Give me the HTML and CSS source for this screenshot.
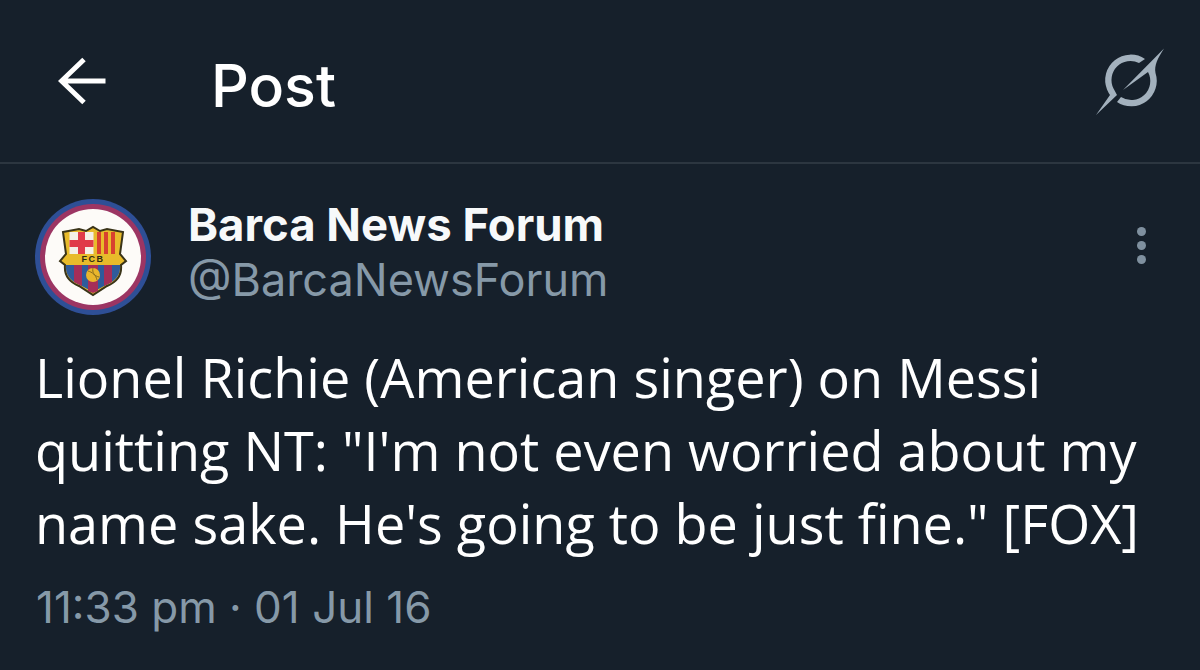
FILE: index.html
```html
<!DOCTYPE html>
<html lang="en">
<head>
<meta charset="utf-8">
<title>Post</title>
<link rel="stylesheet" href="styles.css">
</head>
<body>
<main class="screen">
  <header class="topbar">
    <svg class="back" viewBox="0 0 50 50" width="50" height="50" aria-hidden="true">
      <path d="M47.500 25H4M26 3.500L3.500 25L26 46.500" fill="none" stroke="#fff" stroke-width="5"/>
    </svg>
    <h1 class="title">Post</h1>
    <svg class="grok" viewBox="10 13 80 76" width="80" height="76" aria-hidden="true">
      <path d="M65 29A25.500 25.500 0 0 0 27 59.500Q28.500 63 30 65L16 85L37 65L33.500 58.500A19 19 0 0 1 59 33Z" fill="#a3b1bd"/>
      <path d="M84 18.500C78 28 74 35 75.500 43A25.500 25.500 0 0 1 37 72L41 67A19 19 0 0 0 68 42L43 60Z" fill="#a3b1bd"/>
    </svg>
  </header>
  <section class="post">
    <div class="author">
      <svg class="avatar" viewBox="0 0 116 116" width="116" height="116" aria-hidden="true">
        <circle cx="58" cy="58" r="58" fill="#2e4f96"/>
        <circle cx="58" cy="58" r="53" fill="#9c3563"/>
        <circle cx="58" cy="58" r="48" fill="#fdfbf8"/>
        <path d="M28 33L44 30L51 32L58 28L65 32L72 30L88 33L85 55L91 62L86 66C87 76 82 83 72 87L58 96L44 87C34 83 29 76 30 66L25 62L31 55Z" fill="#e8bb2b" stroke="#3a3418" stroke-width="2"/>
        <rect x="34.500" y="33" width="24" height="22" fill="#f4f0e6"/>
        <path d="M43 33h7v8h8.500v7h-8.500v7h-7v-7h-8.500v-7h8.500z" fill="#e03b48"/>
        <path d="M62 33h4v22h-4zM69 33h4v22h-4zM76 33h4v22h-4z" fill="#d8412f"/>
        <text class="fcb" x="58" y="63" text-anchor="middle">FCB</text>
        <path d="M31 66H85C86 75 81 82 71 86L58 93L45 86C35 82 30 75 31 66Z" fill="#2f5b9b"/>
        <path d="M39 66h8v21l-8-4zM53 66h10v26l-5 2-5-2zM69 66h8v17l-8 4z" fill="#a52e58"/>
        <circle cx="58" cy="76" r="7" fill="#e9b62c"/>
        <path d="M53 72c4 1 8 4 9 9M58 69c-1 4 1 8 6 9" fill="none" stroke="#8b6d1c" stroke-width="1"/>
      </svg>
      <div class="names">
        <div class="name">Barca News Forum</div>
        <div class="handle">@BarcaNewsForum</div>
      </div>
      <div class="more" aria-hidden="true"><i></i><i></i><i></i></div>
    </div>
    <p class="text">Lionel Richie (American singer) on Messi<br>quitting NT: "I'm not even worried about my<br>name sake. He's going to be just fine." [FOX]</p>
    <div class="time">11:33 pm · 01 Jul 16</div>
  </section>
</main>
</body>
</html>
```

FILE: styles.css
```css
html, body {
  margin: 0;
  padding: 0;
  background: #16202b;
}

.screen {
  width: 1200px;
  height: 670px;
  overflow: hidden;
  background: #16202b;
  font-family: Inter, Roboto, "Liberation Sans", sans-serif;
}

.topbar {
  display: flex;
  align-items: center;
  height: 162px;
  padding: 0 30px 0 58px;
  border-bottom: 2px solid #2c3640;
}

.back {
  flex: none;
}

.title {
  margin: 10px 0 0 103px;
  flex: 1;
  font-size: 59px;
  font-weight: 500;
  line-height: 60px;
  color: #fff;
}

.grok {
  flex: none;
}

.post {
  padding: 34px 37px 0;
}

.author {
  display: flex;
  align-items: center;
  height: 118px;
}

.avatar {
  flex: none;
  margin-left: -2px;
}

.names {
  flex: 1;
  margin-left: 37px;
  align-self: flex-start;
}

.name {
  font-size: 45.500px;
  font-weight: 700;
  line-height: 54px;
  color: #f7f9fa;
}

.handle {
  font-size: 45px;
  line-height: 55px;
  color: #8699a8;
}

.more {
  display: flex;
  flex-direction: column;
  align-self: flex-start;
  gap: 5px;
  margin: 29px 17px 0 0;
}

.more i {
  width: 9px;
  height: 9px;
  border-radius: 50%;
  background: #7f909f;
}

.fcb {
  font-family: "Liberation Sans", sans-serif;
  font-size: 9px;
  font-weight: 700;
  letter-spacing: 1.500px;
  fill: #2d2a14;
}

.text {
  margin: 25px 0 0 -2px;
  font-family: "Open Sans", sans-serif;
  font-size: 54px;
  line-height: 73px;
  color: #fff;
  white-space: nowrap;
}

.time {
  margin: 20px 0 0 -1px;
  font-size: 44px;
  line-height: 54px;
  color: #8699a8;
}
```
